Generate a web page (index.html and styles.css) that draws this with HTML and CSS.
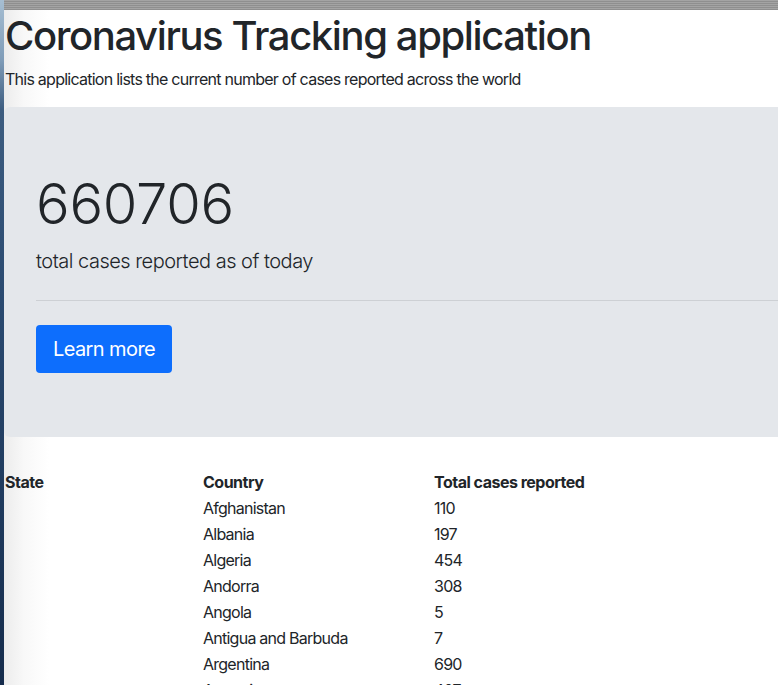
FILE: index.html
```html
<!DOCTYPE html>
<html lang="en">
<head>
<meta charset="utf-8">
<title>Coronavirus Tracking application</title>
<link rel="stylesheet" href="styles.css">
</head>
<body>
<div class="screen">
  <div class="desk"></div>
  <div class="window">
    <div class="topbar"></div>
    <div class="page">
      <h1 class="title">Coronavirus Tracking application</h1>
      <p class="intro">This application lists the current number of cases reported across the world</p>
      <div class="jumbotron">
        <h2 class="display">660706</h2>
        <p class="lead">total cases reported as of today</p>
        <hr class="divider">
        <a class="btn" href="#">Learn more</a>
      </div>
      <div class="table">
        <div class="row head"><span>State</span><span>Country</span><span>Total cases reported</span></div>
        <div class="row"><span></span><span>Afghanistan</span><span>110</span></div>
        <div class="row"><span></span><span>Albania</span><span>197</span></div>
        <div class="row"><span></span><span>Algeria</span><span>454</span></div>
        <div class="row"><span></span><span>Andorra</span><span>308</span></div>
        <div class="row"><span></span><span>Angola</span><span>5</span></div>
        <div class="row"><span></span><span>Antigua and Barbuda</span><span>7</span></div>
        <div class="row"><span></span><span>Argentina</span><span>690</span></div>
        <div class="row"><span></span><span>Armenia</span><span>407</span></div>
      </div>
    </div>
  </div>
</div>
</body>
</html>
```
FILE: styles.css
```css
html, body {
  margin: 0;
  padding: 0;
  height: 100%;
  overflow: hidden;
}
body {
  font-family: Inter, "Liberation Sans", sans-serif;
  color: #212529;
  background: #fff;
}
.screen {
  display: flex;
  height: 685px;
  overflow: hidden;
}
.desk {
  width: 4px;
  flex: none;
  background: linear-gradient(#a6bed2 0, #7f9cb8 60px, #3d5d80 110px, #2a4a70 300px, #152c4c 685px);
}
.window {
  flex: 1;
  min-width: 0;
  background: linear-gradient(to right, #ececec 0, #f8f8f8 20px, #fff 45px);
}
.topbar {
  height: 10px;
  background: repeating-linear-gradient(#a4a4a4 0, #a4a4a4 1px, #8f8f8f 1px, #8f8f8f 2px);
}
.page {
  padding-left: 1px;
}
.title {
  margin: 2px 0 0;
  font-size: 40px;
  font-weight: 500;
  line-height: 1.2;
  letter-spacing: -1.4px;
}
.intro {
  margin: 7px 0 0;
  font-size: 16px;
  line-height: 24px;
  letter-spacing: -0.75px;
}
.jumbotron {
  margin-top: 16px;
  margin-left: -1px;
  padding: 64px 0 64px 32px;
  background: #e4e7eb;
  border-radius: 6px 0 0 6px;
}
.display {
  margin: 0 0 8px;
  font-size: 56px;
  font-weight: 300;
  line-height: 1.2;
  letter-spacing: -0.3px;
}
.lead {
  margin: 0;
  font-size: 20px;
  font-weight: 300;
  line-height: 30px;
  letter-spacing: -0.5px;
}
.divider {
  margin: 24px 0;
  border: 0;
  border-top: 1px solid #cdd0d4;
}
.btn {
  display: inline-block;
  padding: 8px 17px;
  font-size: 20px;
  line-height: 32px;
  letter-spacing: -0.6px;
  color: #fff;
  background: #0d6efd;
  border-radius: 4px;
  text-decoration: none;
}
.table {
  margin-top: 32px;
}
.row {
  display: grid;
  grid-template-columns: 198px 231px 1fr;
  font-size: 16px;
  line-height: 26px;
  letter-spacing: -0.75px;
}
.row.head {
  font-weight: 700;
  letter-spacing: -0.5px;
}
```
